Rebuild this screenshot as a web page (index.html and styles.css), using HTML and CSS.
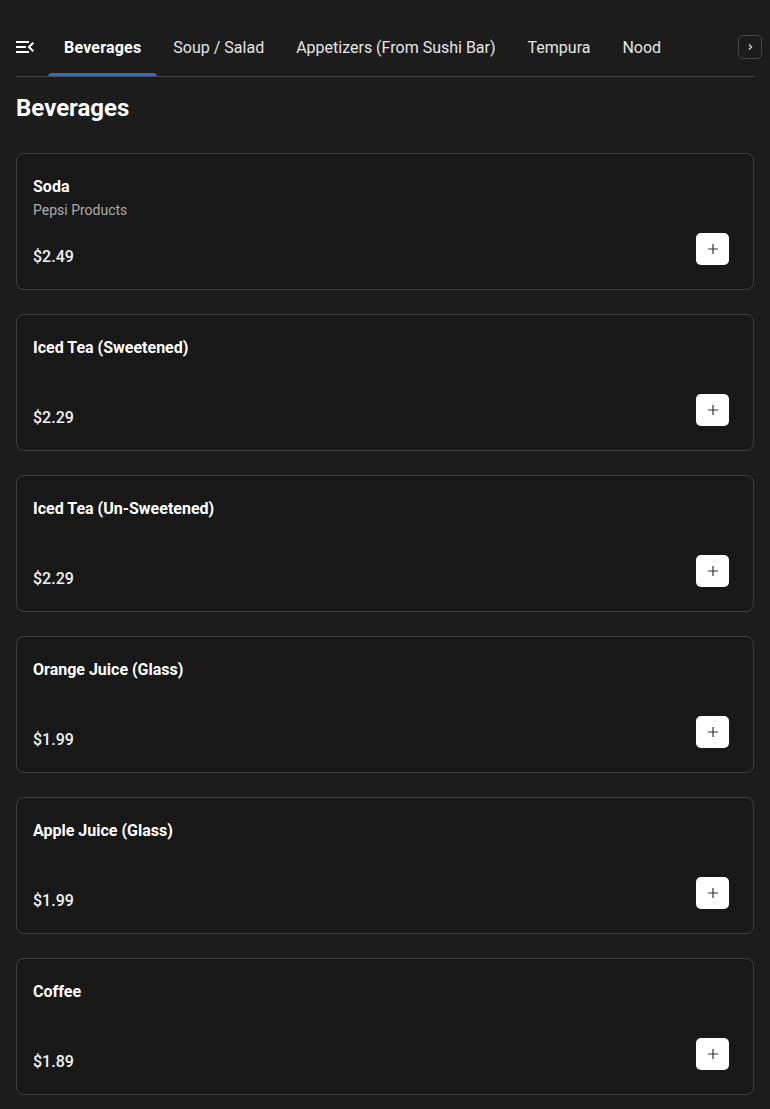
FILE: index.html
```html
<!DOCTYPE html>
<html lang="en">
<head>
  <meta charset="UTF-8" />
  <meta name="viewport" content="width=device-width, initial-scale=1" />
  <title>Menu - Beverages</title>
  <link rel="stylesheet" href="styles.css">
</head>
<body>
  <header class="tabbar">
    <button class="menu-toggle" aria-label="Close menu">
      <svg width="18" height="12" viewBox="3 6 18 12"><path fill="#fff" d="M3 18h13v-2H3v2zm0-5h10v-2H3v2zm0-7v2h13V6H3zm18 9.59L17.42 12 21 8.41 19.59 7l-5 5 5 5 1.41-1.41z"/></svg>
    </button>
    <nav class="tabs">
      <a class="tab active" href="#beverages">Beverages</a>
      <a class="tab" href="#soup">Soup / Salad</a>
      <a class="tab" href="#appetizers">Appetizers (From Sushi Bar)</a>
      <a class="tab" href="#tempura">Tempura</a>
      <a class="tab" href="#noodles">Noodles</a>
      <a class="tab" href="#rolls">Rolls</a>
    </nav>
    <button class="scroll-right" aria-label="Scroll tabs">
      <svg width="8" height="8" viewBox="0 0 8 8"><path d="M3 1.5 5.5 4 3 6.5" fill="none" stroke="#ddd" stroke-width="1.2"/></svg>
    </button>
  </header>

  <main>
    <h1 class="section-title">Beverages</h1>

    <div class="items">
      <div class="item">
        <div class="item-name">Soda</div>
        <div class="item-desc">Pepsi Products</div>
        <div class="item-foot">
          <span class="price">$2.49</span>
          <button class="add" aria-label="Add"><svg width="10" height="10" viewBox="0 0 10 10"><path d="M5 0v10M0 5h10" stroke="#333" stroke-width="1.2"/></svg></button>
        </div>
      </div>

      <div class="item">
        <div class="item-name">Iced Tea (Sweetened)</div>
        <div class="item-foot">
          <span class="price">$2.29</span>
          <button class="add" aria-label="Add"><svg width="10" height="10" viewBox="0 0 10 10"><path d="M5 0v10M0 5h10" stroke="#333" stroke-width="1.2"/></svg></button>
        </div>
      </div>

      <div class="item">
        <div class="item-name">Iced Tea (Un-Sweetened)</div>
        <div class="item-foot">
          <span class="price">$2.29</span>
          <button class="add" aria-label="Add"><svg width="10" height="10" viewBox="0 0 10 10"><path d="M5 0v10M0 5h10" stroke="#333" stroke-width="1.2"/></svg></button>
        </div>
      </div>

      <div class="item">
        <div class="item-name">Orange Juice (Glass)</div>
        <div class="item-foot">
          <span class="price">$1.99</span>
          <button class="add" aria-label="Add"><svg width="10" height="10" viewBox="0 0 10 10"><path d="M5 0v10M0 5h10" stroke="#333" stroke-width="1.2"/></svg></button>
        </div>
      </div>

      <div class="item">
        <div class="item-name">Apple Juice (Glass)</div>
        <div class="item-foot">
          <span class="price">$1.99</span>
          <button class="add" aria-label="Add"><svg width="10" height="10" viewBox="0 0 10 10"><path d="M5 0v10M0 5h10" stroke="#333" stroke-width="1.2"/></svg></button>
        </div>
      </div>

      <div class="item">
        <div class="item-name">Coffee</div>
        <div class="item-foot">
          <span class="price">$1.89</span>
          <button class="add" aria-label="Add"><svg width="10" height="10" viewBox="0 0 10 10"><path d="M5 0v10M0 5h10" stroke="#333" stroke-width="1.2"/></svg></button>
        </div>
      </div>
    </div>
  </main>
</body>
</html>
```

FILE: styles.css
```css
body { margin: 0; padding: 0 16px 24px; background: #1c1c1c; color: #fff; font-family: Roboto, "Liberation Sans", sans-serif; }
button { font: inherit; cursor: pointer; }

.tabbar { position: relative; display: flex; align-items: stretch; height: 57px; padding-top: 19px; border-bottom: 1px solid #484848; }
.menu-toggle { display: flex; align-items: center; padding: 0; margin: 0 14px 0 0; background: none; border: none; }
.menu-toggle svg { display: block; margin-top: -1px; }
.tabs { display: flex; flex: 1; overflow: hidden; margin-right: 92px; }
.tab { position: relative; display: flex; align-items: center; padding: 0 16px; color: #e4e4e4; font-size: 16px; line-height: 24px; text-decoration: none; white-space: nowrap; }
.tab.active { color: #fff; font-weight: 700; letter-spacing: 0.2px; }
.tab.active::after { content: ""; position: absolute; left: 0; right: 0; bottom: -1px; height: 4px; background: #2e6dc4; border-radius: 4px 4px 0 0; }
.scroll-right { position: absolute; right: -8px; top: 35px; width: 24px; height: 24px; padding: 0; display: flex; align-items: center; justify-content: center; background: #1c1c1c; border: 1px solid #464646; border-radius: 5px; }

.section-title { margin: 15px 0 29px; font-size: 24px; line-height: 32px; font-weight: 700; }

.items { display: flex; flex-direction: column; gap: 24px; }
.item { display: flex; flex-direction: column; height: 137px; box-sizing: border-box; padding: 21px 24px 20px 16px; background: #181818; border: 1px solid #3e3e3e; border-radius: 8px; }
.item-name { font-size: 16px; line-height: 24px; font-weight: 700; }
.item-desc { margin-top: 1px; font-size: 14px; line-height: 20px; color: #ababab; }
.item-foot { display: flex; justify-content: space-between; align-items: flex-end; margin-top: auto; }
.price { font-size: 16px; line-height: 24px; font-weight: 500; color: #f2f2f2; }
.add { width: 33px; height: 32px; margin-bottom: 4px; padding: 0; display: flex; align-items: center; justify-content: center; background: #fff; border: none; border-radius: 5px; }
```
